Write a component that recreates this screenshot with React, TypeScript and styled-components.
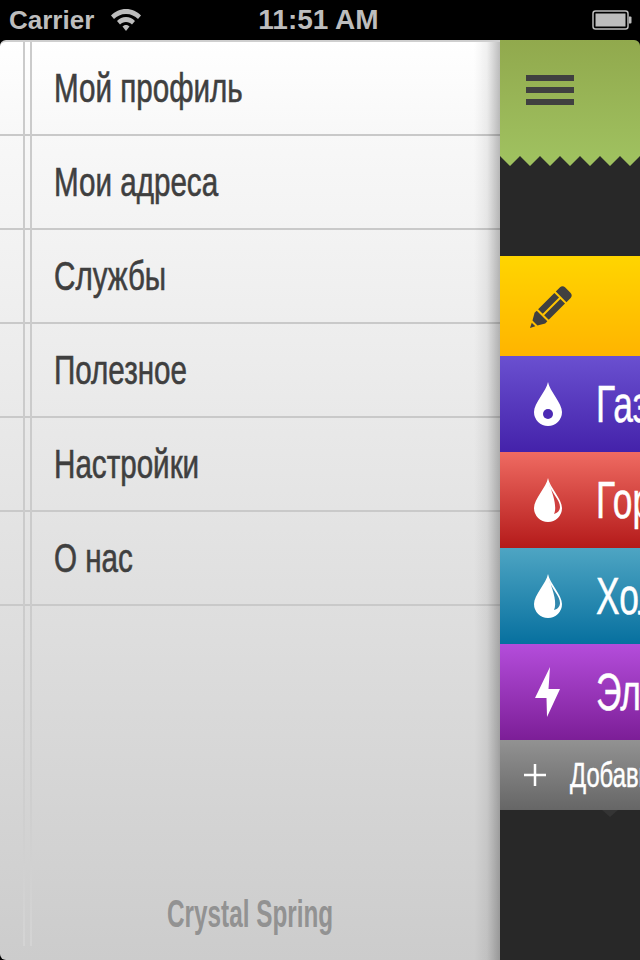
import React from "react";
import styled, { createGlobalStyle } from "styled-components";

const Global = createGlobalStyle`
  html, body { margin: 0; padding: 0; background: #000; }
  #root { width: 640px; height: 960px; overflow: hidden; }
`;
const Screen = styled.div`
  width: 640px; height: 960px; background: #000; display: flex; flex-direction: column; overflow: hidden;
  font-family: "Liberation Sans", Arial, sans-serif;
`;
const StatusBar = styled.div`
  height: 40px; flex: none; display: grid; grid-template-columns: 1fr auto 1fr; align-items: center;
  padding: 0 8px 0 9px; color: #bdbdbd; font-weight: 700; font-size: 26px;
`;
const StatusLeft = styled.div`display: flex; align-items: center; gap: 16px; font-size: 26px;`;
const Time = styled.div`font-size: 28px; margin-left: -4px;`;
const StatusRight = styled.div`display: flex; justify-content: flex-end;`;
const Body = styled.div`flex: 1; display: flex; min-height: 0;`;
const Menu = styled.div`
  position: relative; width: 500px; flex: none; box-sizing: border-box; border-top: 2px solid #cfcfcf;
  border-radius: 6px 0 0 6px; overflow: hidden;
  background: linear-gradient(#ffffff 0%, #f8f8f8 10%, #cccccc 100%);
  display: flex; flex-direction: column;
`;
const Shade = styled.div`
  position: absolute; top: 0; right: 0; bottom: 0; width: 26px; pointer-events: none;
  background: linear-gradient(to right, rgba(0,0,0,0), rgba(0,0,0,0.06) 50%, rgba(0,0,0,0.26));
`;
const Rule = styled.div<{ $x: number }>`
  position: absolute; top: 0; bottom: 14px; left: ${p => p.$x}px; width: 2px;
  background: linear-gradient(#cbcbcb, #cbcbcb 60%, #cfcfcf 85%, #d4d4d4 100%);
`;
const MenuRow = styled.div`
  height: 94px; box-sizing: border-box; flex: none; border-bottom: 2px solid #c9c9c9;
  display: flex; align-items: center; padding: 0 0 0 54px;
  color: #3f3f3f; font-size: 40px; white-space: nowrap; -webkit-text-stroke: 0.6px #3f3f3f;
`;
const Narrow = styled.span<{ $s: number }>`
  display: inline-block; transform: scaleX(${p => p.$s}); transform-origin: left center;
`;
const Brand = styled.div`
  margin-top: auto; height: 67px; flex: none; box-sizing: border-box; padding: 0 0 0 167px; color: #929292; font-size: 38px; font-weight: 700; white-space: nowrap;
`;
const Side = styled.div`
  flex: 1; min-width: 0; background: #282828; display: flex; flex-direction: column; overflow: hidden;
  border-radius: 0 6px 0 0;
`;
const Header = styled.div`
  height: 116px; flex: none; display: flex; flex-direction: column; gap: 6px; padding: 35px 0 0 26px; box-sizing: border-box;
  background: linear-gradient(#91a94d, #9fc05f);
`;
const Bar = styled.div`width: 48px; height: 6px; flex: none; background: #404040;`;
const Teeth = styled.svg`display: block; width: 140px; height: 10px; flex: none;`;
const Gap = styled.div`height: 90px; flex: none;`;
const Tile = styled.div<{ $h: number; $from: string; $to: string; $size?: number; $color?: string }>`
  height: ${p => p.$h}px; flex: none; box-sizing: border-box;
  background: linear-gradient(${p => p.$from}, ${p => p.$to});
  display: flex; align-items: center; overflow: hidden; white-space: nowrap;
  color: ${p => p.$color || "#fff"}; font-size: ${p => p.$size || 52}px; -webkit-text-stroke: 0.5px ${p => p.$color || "#fff"};
`;
const IconSlot = styled.div<{ $w: number; $pad: number }>`
  width: ${p => p.$w}px; padding-left: ${p => p.$pad}px; flex: none; box-sizing: border-box; display: flex; align-items: center;
`;
const Notch = styled.svg`display: block; margin-left: 102px; width: 16px; height: 7px; flex: none;`;

const Drop = ({ hole, shine }: { hole?: string; shine?: string }) => (
  <svg width="28" height="44" viewBox="0 0 28 44">
    <path d="M14 0C15.500 9 28 21 28 30A14 14 0 0 1 0 30C0 21 12.500 9 14 0Z" fill="#fff" />
    {hole && <circle cx="14" cy="32" r="5" fill={hole} />}
    {shine && <path d="M15 6C17 14 26 22 26 29C26 32 24 35 20 36C23 30 20 18 15 6Z" fill={shine} />}
  </svg>
);

const menu: string[] = ["Мой профиль", "Мои адреса", "Службы", "Полезное", "Настройки", "О нас"];
const tooth = "M0 0H140L130 10L120 0L110 10L100 0L90 10L80 0L70 10L60 0L50 10L40 0L30 10L20 0L10 10L0 0Z";

export default function App() {
  return (
    <Screen>
      <Global />
      <StatusBar>
        <StatusLeft>
          Carrier
          <svg width="32" height="24" viewBox="0 0 32 24" fill="#bdbdbd">
            <path d="M16 1C10 1 5 3.5 1 7.5L4 11C7 8 11 6 16 6S25 8 28 11L31 7.5C27 3.500 22 1 16 1Z" />
            <path d="M16 9C12.500 9 9.500 10.500 7 13L10 16.500C11.500 15 13.500 14 16 14S20.500 15 22 16.500L25 13C22.500 10.500 19.500 9 16 9Z" />
            <path d="M16 17C14.500 17 13.300 17.600 12.500 18.500L16 23L19.500 18.500C18.700 17.600 17.500 17 16 17Z" />
          </svg>
        </StatusLeft>
        <Time>11:51 AM</Time>
        <StatusRight>
          <svg width="40" height="20" viewBox="0 0 40 20">
            <rect x="1" y="1" width="35" height="18" rx="2.500" fill="none" stroke="#bdbdbd" strokeWidth="1.500" />
            <rect x="3.500" y="3.500" width="30" height="13" fill="#bdbdbd" />
            <path d="M37 6.500h1.500a1 1 0 0 1 1 1v5a1 1 0 0 1-1 1H37Z" fill="#bdbdbd" />
          </svg>
        </StatusRight>
      </StatusBar>
      <Body>
        <Menu>
          {menu.map(t => (
            <MenuRow key={t}><Narrow $s={0.74}>{t}</Narrow></MenuRow>
          ))}
          <Brand><Narrow $s={0.64}>Crystal Spring</Narrow></Brand>
          <Rule $x={23} />
          <Rule $x={30} />
          <Shade />
        </Menu>
        <Side>
          <Header><Bar /><Bar /><Bar /></Header>
          <Teeth viewBox="0 0 140 10"><path d={tooth} fill="#9fc05f" /></Teeth>
          <Gap />
          <Tile $h={100} $from="#ffd500" $to="#ffb400">
            <IconSlot $w={97} $pad={29}>
              <svg width="46" height="46" viewBox="0 0 46 46">
                <g transform="translate(1 45) rotate(-45)" fill="#404040">
                  <path d="M0 0L5 -2.500V2.500Z" />
                  <path d="M7 -3.500L14 -7.500H17V7.500H14L7 3.500Z" />
                  <rect x="19" y="-7.500" width="23" height="6.500" />
                  <rect x="19" y="1" width="23" height="6.500" />
                  <path d="M44 -7.500H50C52 -7.500 53.500 -6 53.500 -4V4C53.500 6 52 7.500 50 7.500H44Z" />
                </g>
              </svg>
            </IconSlot>
          </Tile>
          <Tile $h={96} $from="#6a50d0" $to="#4422aa">
            <IconSlot $w={96} $pad={34}><Drop hole="#4c2ab4" /></IconSlot>
            <Narrow $s={0.68}>Газ</Narrow>
          </Tile>
          <Tile $h={96} $from="#ef6b62" $to="#b41a1a">
            <IconSlot $w={96} $pad={34}><Drop shine="#cf4040" /></IconSlot>
            <Narrow $s={0.68}>Горячая</Narrow>
          </Tile>
          <Tile $h={96} $from="#4ea5c3" $to="#07709f">
            <IconSlot $w={96} $pad={34}><Drop shine="#3187ad" /></IconSlot>
            <Narrow $s={0.68}>Холодная</Narrow>
          </Tile>
          <Tile $h={96} $from="#b44ddb" $to="#7c1e97">
            <IconSlot $w={96} $pad={34}>
              <svg width="28" height="52" viewBox="0 0 28 52">
                <path d="M16 1L1 32H12.500L13 51L26 23H14.500Z" fill="#fff" />
              </svg>
            </IconSlot>
            <Narrow $s={0.68}>Электричество</Narrow>
          </Tile>
          <Tile $h={70} $from="#929292" $to="#666" $size={35}>
            <IconSlot $w={70} $pad={23}>
              <svg width="24" height="24" viewBox="0 0 24 24">
                <path d="M12 1V23M1 12H23" stroke="#fff" strokeWidth="2.500" fill="none" />
              </svg>
            </IconSlot>
            <Narrow $s={0.68}>Добавить</Narrow>
          </Tile>
          <Notch viewBox="0 0 16 7"><path d="M0 0H16L8 7Z" fill="#343434" /></Notch>
        </Side>
      </Body>
    </Screen>
  );
}
